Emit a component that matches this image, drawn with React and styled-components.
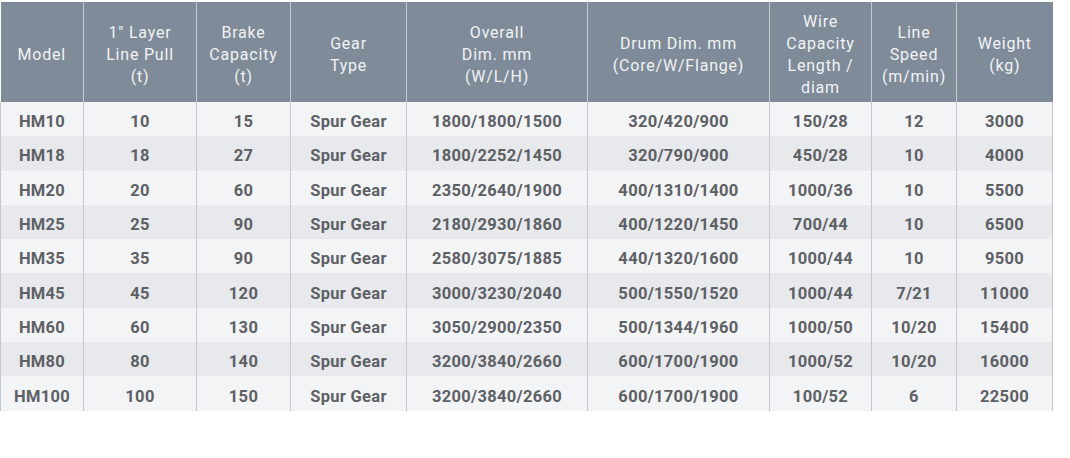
import React from 'react';
import styled, { createGlobalStyle } from 'styled-components';

const GlobalStyle = createGlobalStyle`
  html, body { margin: 0; padding: 0; background: #ffffff; }
  body { font-family: Roboto, "Liberation Sans", sans-serif; }
`;

const Page = styled.div`
  padding-top: 2px;
  width: 1051px;
`;

const Table = styled.table`
  border-collapse: collapse;
  table-layout: fixed;
  width: 1052px;
`;

const HeadCell = styled.th`
  background: #7f8b98;
  color: #f1f3f5;
  font-weight: 400;
  font-size: 16px;
  line-height: 22px;
  letter-spacing: 0.8px;
  height: 100px;
  box-sizing: border-box;
  padding: 6px 4px 0;
  text-align: center;
  vertical-align: middle;
  border-left: 1px solid #c3c9cf;
  &:first-child { border-left: none; }
`;

const Row = styled.tr`
  background: ${p => (p.$shade ? '#e7e9ec' : '#f3f4f6')};
`;

const Cell = styled.td`
  height: 34.3px;
  box-sizing: border-box;
  padding: 5px 0 0;
  text-align: center;
  vertical-align: middle;
  color: #5d6064;
  font-weight: 700;
  font-size: 16.5px;
  letter-spacing: 0.3px;
  border-left: 1px solid #c6cacf;
  &:last-child { border-right: 1px solid #c6cacf; }
`;

const columns = [
  { w: 83, label: ['Model'] },
  { w: 113, label: ['1" Layer', 'Line Pull', '(t)'] },
  { w: 94, label: ['Brake', 'Capacity', '(t)'] },
  { w: 116, label: ['Gear', 'Type'] },
  { w: 181, label: ['Overall', 'Dim. mm', '(W/L/H)'] },
  { w: 182, label: ['Drum Dim. mm', '(Core/W/Flange)'] },
  { w: 102, label: ['Wire', 'Capacity', 'Length /', 'diam'] },
  { w: 85, label: ['Line', 'Speed', '(m/min)'] },
  { w: 96, label: ['Weight', '(kg)'] },
];

const rows = [
  ['HM10', '10', '15', 'Spur Gear', '1800/1800/1500', '320/420/900', '150/28', '12', '3000'],
  ['HM18', '18', '27', 'Spur Gear', '1800/2252/1450', '320/790/900', '450/28', '10', '4000'],
  ['HM20', '20', '60', 'Spur Gear', '2350/2640/1900', '400/1310/1400', '1000/36', '10', '5500'],
  ['HM25', '25', '90', 'Spur Gear', '2180/2930/1860', '400/1220/1450', '700/44', '10', '6500'],
  ['HM35', '35', '90', 'Spur Gear', '2580/3075/1885', '440/1320/1600', '1000/44', '10', '9500'],
  ['HM45', '45', '120', 'Spur Gear', '3000/3230/2040', '500/1550/1520', '1000/44', '7/21', '11000'],
  ['HM60', '60', '130', 'Spur Gear', '3050/2900/2350', '500/1344/1960', '1000/50', '10/20', '15400'],
  ['HM80', '80', '140', 'Spur Gear', '3200/3840/2660', '600/1700/1900', '1000/52', '10/20', '16000'],
  ['HM100', '100', '150', 'Spur Gear', '3200/3840/2660', '600/1700/1900', '100/52', '6', '22500'],
];

export default function App() {
  return (
    <Page>
      <GlobalStyle />
      <Table>
        <colgroup>
          {columns.map((c, i) => <col key={i} style={{ width: c.w }} />)}
        </colgroup>
        <thead>
          <tr>
            {columns.map((c, i) => (
              <HeadCell key={i}>
                {c.label.map((l, j) => <div key={j}>{l}</div>)}
              </HeadCell>
            ))}
          </tr>
        </thead>
        <tbody>
          {rows.map((r, i) => (
            <Row key={r[0]} $shade={i % 2 === 1}>
              {r.map((v, j) => <Cell key={j}>{v}</Cell>)}
            </Row>
          ))}
        </tbody>
      </Table>
    </Page>
  );
}
